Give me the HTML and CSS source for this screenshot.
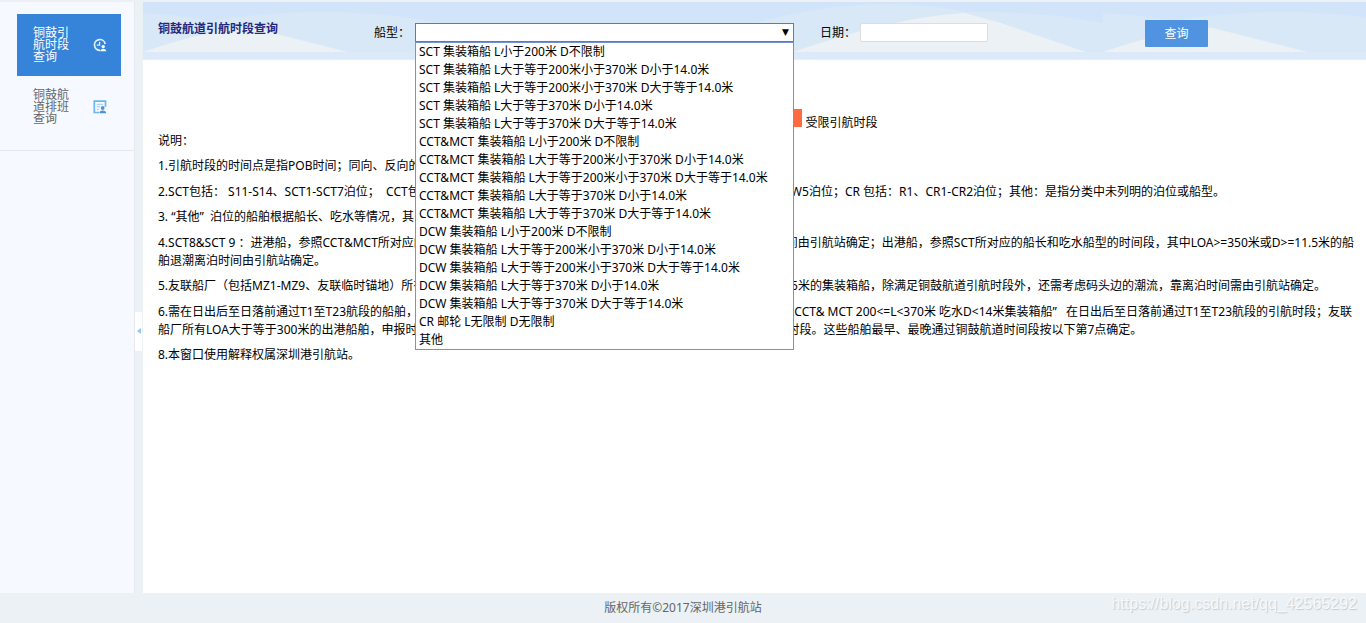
FILE: index.html
```html
<!DOCTYPE html>
<html lang="zh-CN">
<head>
<meta charset="utf-8">
<title>铜鼓航道引航时段查询</title>
<link rel="stylesheet" href="styles.css">
</head>
<body>
<div class="layout">
  <nav class="sidebar">
    <a class="menu-item active" href="#"><span class="menu-text">铜鼓引航时段查询</span>
      <svg class="menu-icon" viewBox="0 0 14 14" fill="none" stroke="#e4effb"><path d="M7.2 12.3A5.4 5.4 0 1 1 12.2 6" stroke-width="1.7"/><path d="M6.6 3.8V7.2H3.8" stroke-width="1.3"/><circle cx="10.2" cy="8.6" r="1.7" fill="#fff" stroke="none"/><path d="M7.4 13.2c0-1.6 1-2.2 2.8-2.5 1.8.3 3 .9 3 2.5z" fill="#fff" stroke="none"/></svg>
    </a>
    <a class="menu-item" href="#"><span class="menu-text">铜鼓航道排班查询</span>
      <svg class="menu-icon" viewBox="0 0 14 14" fill="none" stroke="#6bb7ed"><path d="M6 12.5H1.3V1.2h11.2v5.5" stroke-width="1.7"/><path d="M3.7 4.3h6.5M3.7 6.8h3.5M3.7 9.5h2" stroke="#9cc9ef"/><circle cx="9.7" cy="8" r="1.9" fill="#4b92dd" stroke="none"/><path d="M6.4 13.2c0-2 1.2-2.5 3.3-2.8 2.1.3 3.5 1 3.5 2.8z" fill="#4b92dd" stroke="none"/></svg>
    </a>
  </nav>
  <div class="splitter"><button class="collapse" type="button" aria-label="收起菜单"><svg viewBox="0 0 4 6"><path d="M4 0v6L0 3z" fill="#94c3f6"/></svg></button></div>
  <main class="content">
    <form class="search">
      <svg class="waves" aria-hidden="true">
        <defs>
          <pattern id="wave" width="960" height="50" patternUnits="userSpaceOnUse">
            <path d="M0 11Q35 13 67 19Q120 10 187 10Q250 11 300 22L460 43L600 25Q670 2 750 2Q790 3 824 10Q900 9 960 21V50H0z" fill="#d9e8f7"/>
            <path d="M0 50Q45 34 95 25L110 26L205 50zM650 50Q750 15 822 11L858 21L943 50z" fill="#ebf1f5"/>
          </pattern>
        </defs>
        <rect width="100%" height="50" fill="url(#wave)"/>
      </svg>
      <h1 class="title">铜鼓航道引航时段查询</h1>
      <label class="label" for="ship">船型：</label>
      <div class="combo">
        <select class="ship" id="ship"><option></option></select>
        <span class="arrow" aria-hidden="true">▼</span>
        <ul class="options" role="listbox" aria-label="船型">
          <li role="option">SCT 集装箱船 L小于200米 D不限制</li>
          <li role="option">SCT 集装箱船 L大于等于200米小于370米 D小于14.0米</li>
          <li role="option">SCT 集装箱船 L大于等于200米小于370米 D大于等于14.0米</li>
          <li role="option">SCT 集装箱船 L大于等于370米 D小于14.0米</li>
          <li role="option">SCT 集装箱船 L大于等于370米 D大于等于14.0米</li>
          <li role="option">CCT&amp;MCT 集装箱船 L小于200米 D不限制</li>
          <li role="option">CCT&amp;MCT 集装箱船 L大于等于200米小于370米 D小于14.0米</li>
          <li role="option">CCT&amp;MCT 集装箱船 L大于等于200米小于370米 D大于等于14.0米</li>
          <li role="option">CCT&amp;MCT 集装箱船 L大于等于370米 D小于14.0米</li>
          <li role="option">CCT&amp;MCT 集装箱船 L大于等于370米 D大于等于14.0米</li>
          <li role="option">DCW 集装箱船 L小于200米 D不限制</li>
          <li role="option">DCW 集装箱船 L大于等于200米小于370米 D小于14.0米</li>
          <li role="option">DCW 集装箱船 L大于等于200米小于370米 D大于等于14.0米</li>
          <li role="option">DCW 集装箱船 L大于等于370米 D小于14.0米</li>
          <li role="option">DCW 集装箱船 L大于等于370米 D大于等于14.0米</li>
          <li role="option">CR 邮轮 L无限制 D无限制</li>
          <li role="option">其他</li>
        </ul>
      </div>
      <label class="label date-label" for="date">日期：</label>
      <input class="date" id="date" type="text">
      <button class="submit" type="button">查询</button>
    </form>
    <div class="legend">
      <span class="swatch open"></span><span class="legend-text">可以引航时段</span>
      <span class="swatch limited"></span><span>受限引航时段</span>
    </div>
    <div class="notes">
      <p>说明：</p>
      <p>1.引航时段的时间点是指POB时间；同向、反向的船舶航行间隔由引航站确定。</p>
      <p>2.SCT包括： S11-S14、SCT1-SCT7泊位； &nbsp;CCT包括：CCT1-CCT9泊位；MCT包括：MCT1-MCT5泊位；DCW包括：W1-W5泊位；CR 包括：R1、CR1-CR2泊位；其他：是指分类中未列明的泊位或船型。</p>
      <p>3. “其他” &nbsp;泊位的船舶根据船长、吃水等情况，其引航时段由引航站确定。</p>
      <p>4.SCT8&amp;SCT 9 ：进港船，参照CCT&amp;MCT所对应的船长和吃水船型的时间段，其中大型船舶的乘潮进港以及靠泊作业时间由引航站确定；出港船，参照SCT所对应的船长和吃水船型的时间段，其中LOA&gt;=350米或D&gt;=11.5米的船舶退潮离泊时间由引航站确定。</p>
      <p>5.友联船厂（包括MZ1-MZ9、友联临时锚地）所有进出港的船舶， &nbsp;以及船长大于等于300.0米的船舶或吃水大于等于11.5米的集装箱船，除满足铜鼓航道引航时段外，还需考虑码头边的潮流，靠离泊时间需由引航站确定。</p>
      <p>6.需在日出后至日落前通过T1至T23航段的船舶，应按要求向引航站提前申报引航时段。其中船型包括“受限引航时段内的CCT&amp; MCT 200&lt;=L&lt;370米 吃水D&lt;14米集装箱船” &nbsp;&nbsp;在日出后至日落前通过T1至T23航段的引航时段；友联船厂所有LOA大于等于300米的出港船舶，申报时间应当按照规定选择日出后至日落前通过铜鼓航道T1至T23航段的引航时段。这些船舶最早、最晚通过铜鼓航道时间段按以下第7点确定。</p>
      <p>8.本窗口使用解释权属深圳港引航站。</p>
    </div>
  </main>
</div>
<footer class="footer">版权所有©2017深圳港引航站<span class="watermark">https://blog.csdn.net/qq_42565292</span></footer>
</body>
</html>
```
FILE: styles.css
```css
* { box-sizing: border-box; }
body {
  margin: 0;
  min-height: 100vh;
  display: flex;
  flex-direction: column;
  background: #ebf1f5;
  color: #000;
  font: 12px/18px "Noto Sans", "Noto Sans CJK SC", sans-serif;
}
button, input, select { font: inherit; }
.layout { flex: 1; display: flex; padding-top: 2px; }
.sidebar {
  width: 135px;
  padding: 12px 0 0;
  background: #f6f9ff;
  border-right: 1px solid #e6eaee;
}
.sidebar::after { content: ""; display: block; margin-top: 12px; border-top: 1px solid #e4e8ec; }
.menu-item {
  display: flex;
  align-items: center;
  justify-content: space-between;
  margin: 0 13px 0 17px;
  padding: 13px 14px 13px 16px;
  color: #666;
  line-height: 12px;
  text-decoration: none;
}
.menu-item.active { background: #3683da; color: #fff; }
.menu-text { width: 36px; }
.menu-icon { width: 14px; height: 14px; }
.splitter { width: 8px; display: flex; align-items: center; padding-top: 67px; }
.collapse { width: 7px; height: 39px; padding: 0; border: 0; background: #fff; display: flex; align-items: center; justify-content: center; }
.collapse svg { width: 4px; height: 6px; }
.content { flex: 1; min-width: 0; background: #fff; }
.search {
  position: relative;
  display: flex;
  align-items: flex-start;
  padding: 18px 0 12px 15px;
  background: linear-gradient(#d1e4fa 50px, #dce9f9 50px);
  box-shadow: 0 1px 1px #e6f0fa;
}
.waves { position: absolute; left: 0; top: 0; width: 100%; height: 50px; }
.title { position: relative; width: 216px; margin: 0; font-size: 12px; line-height: 18px; color: #23287f; }
.label { position: relative; width: 41px; margin-top: 4px; }
.combo { position: relative; width: 379px; height: 19px; margin-top: 3px; }
.ship { display: block; width: 100%; height: 19px; padding: 0 4px; border: 1px solid #777; border-radius: 0; background: #fff; appearance: none; }
.arrow { position: absolute; right: 5px; top: 0; font: 9px/18px "DejaVu Sans", sans-serif; }
.options { position: absolute; z-index: 2; left: 0; right: 0; top: 19px; margin: 0; padding: 0 3px; list-style: none; border: 1px solid #7593d2; background: #fff; white-space: nowrap; }
.date-label { margin-left: 26px; width: 40px; }
.date { position: relative; width: 128px; height: 19px; margin-top: 3px; padding: 0 4px; border: 1px solid #ddd; border-radius: 2px; background: #fff; }
.submit { position: relative; margin-left: 157px; width: 63px; height: 27px; padding: 0; border: 0; border-radius: 1px; background: #4f93e1; color: #fff; }
.legend { display: flex; align-items: flex-end; justify-content: center; gap: 4px; margin-top: 50px; }
.legend-text { margin-right: 54px; }
.swatch { width: 18px; height: 18px; margin-bottom: 5px; }
.swatch.open { background: #55c57a; }
.swatch.limited { background: #ff6a40; }
.notes { padding: 0 3px 0 15px; }
.notes p { margin: 0 0 7px; }
.notes p:nth-child(even) { margin-bottom: 8px; }
.footer { position: relative; padding: 6px 0; text-align: center; color: #666; }
.watermark { position: absolute; right: 9px; top: 2px; font: 16px/18px "Liberation Sans", sans-serif; color: #f6f9fb; text-shadow: 1px 1px 1px #c5cace; }
```
